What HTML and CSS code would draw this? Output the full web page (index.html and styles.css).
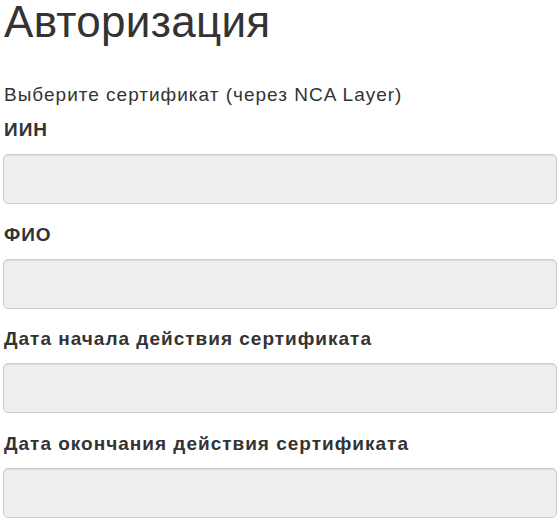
FILE: index.html
```html
<!DOCTYPE html>
<html lang="ru">
<head>
<meta charset="utf-8">
<title>Авторизация</title>
<link rel="stylesheet" href="styles.css">
</head>
<body>
<div class="page">
  <h1 class="title">Авторизация</h1>
  <p class="hint">Выберите сертификат (через NCA Layer)</p>
  <form class="form">
    <div class="group">
      <label class="label">ИИН</label>
      <input class="field" type="text" disabled>
    </div>
    <div class="group">
      <label class="label">ФИО</label>
      <input class="field" type="text" disabled>
    </div>
    <div class="group">
      <label class="label">Дата начала действия сертификата</label>
      <input class="field" type="text" disabled>
    </div>
    <div class="group">
      <label class="label">Дата окончания действия сертификата</label>
      <input class="field" type="text" disabled>
    </div>
  </form>
</div>
</body>
</html>
```

FILE: styles.css
```css
html, body {
  margin: 0;
  padding: 0;
  background: #fff;
}
body {
  font-family: "Liberation Sans", Arial, sans-serif;
  color: #333;
}
.page {
  padding: 0 3px;
}
.title {
  margin: 0;
  padding-left: 1px;
  font-size: 44px;
  font-weight: 400;
  line-height: 44px;
  letter-spacing: 0.3px;
}
.hint {
  margin: 39px 0 0;
  padding-left: 1px;
  font-size: 19px;
  line-height: 24px;
  letter-spacing: 1px;
}
.form {
  display: flex;
  flex-direction: column;
  gap: 18.6px;
  margin-top: 11px;
}
.group {
  display: flex;
  flex-direction: column;
  gap: 12px;
}
.label {
  padding-left: 1px;
  font-size: 19px;
  font-weight: 700;
  line-height: 24px;
  letter-spacing: 1px;
}
.field {
  box-sizing: border-box;
  width: 100%;
  height: 50px;
  margin: 0;
  border: 1px solid #ccc;
  border-radius: 5px;
  background: #eee;
  box-shadow: inset 0 1px 1px rgba(0,0,0,.075);
}
```
